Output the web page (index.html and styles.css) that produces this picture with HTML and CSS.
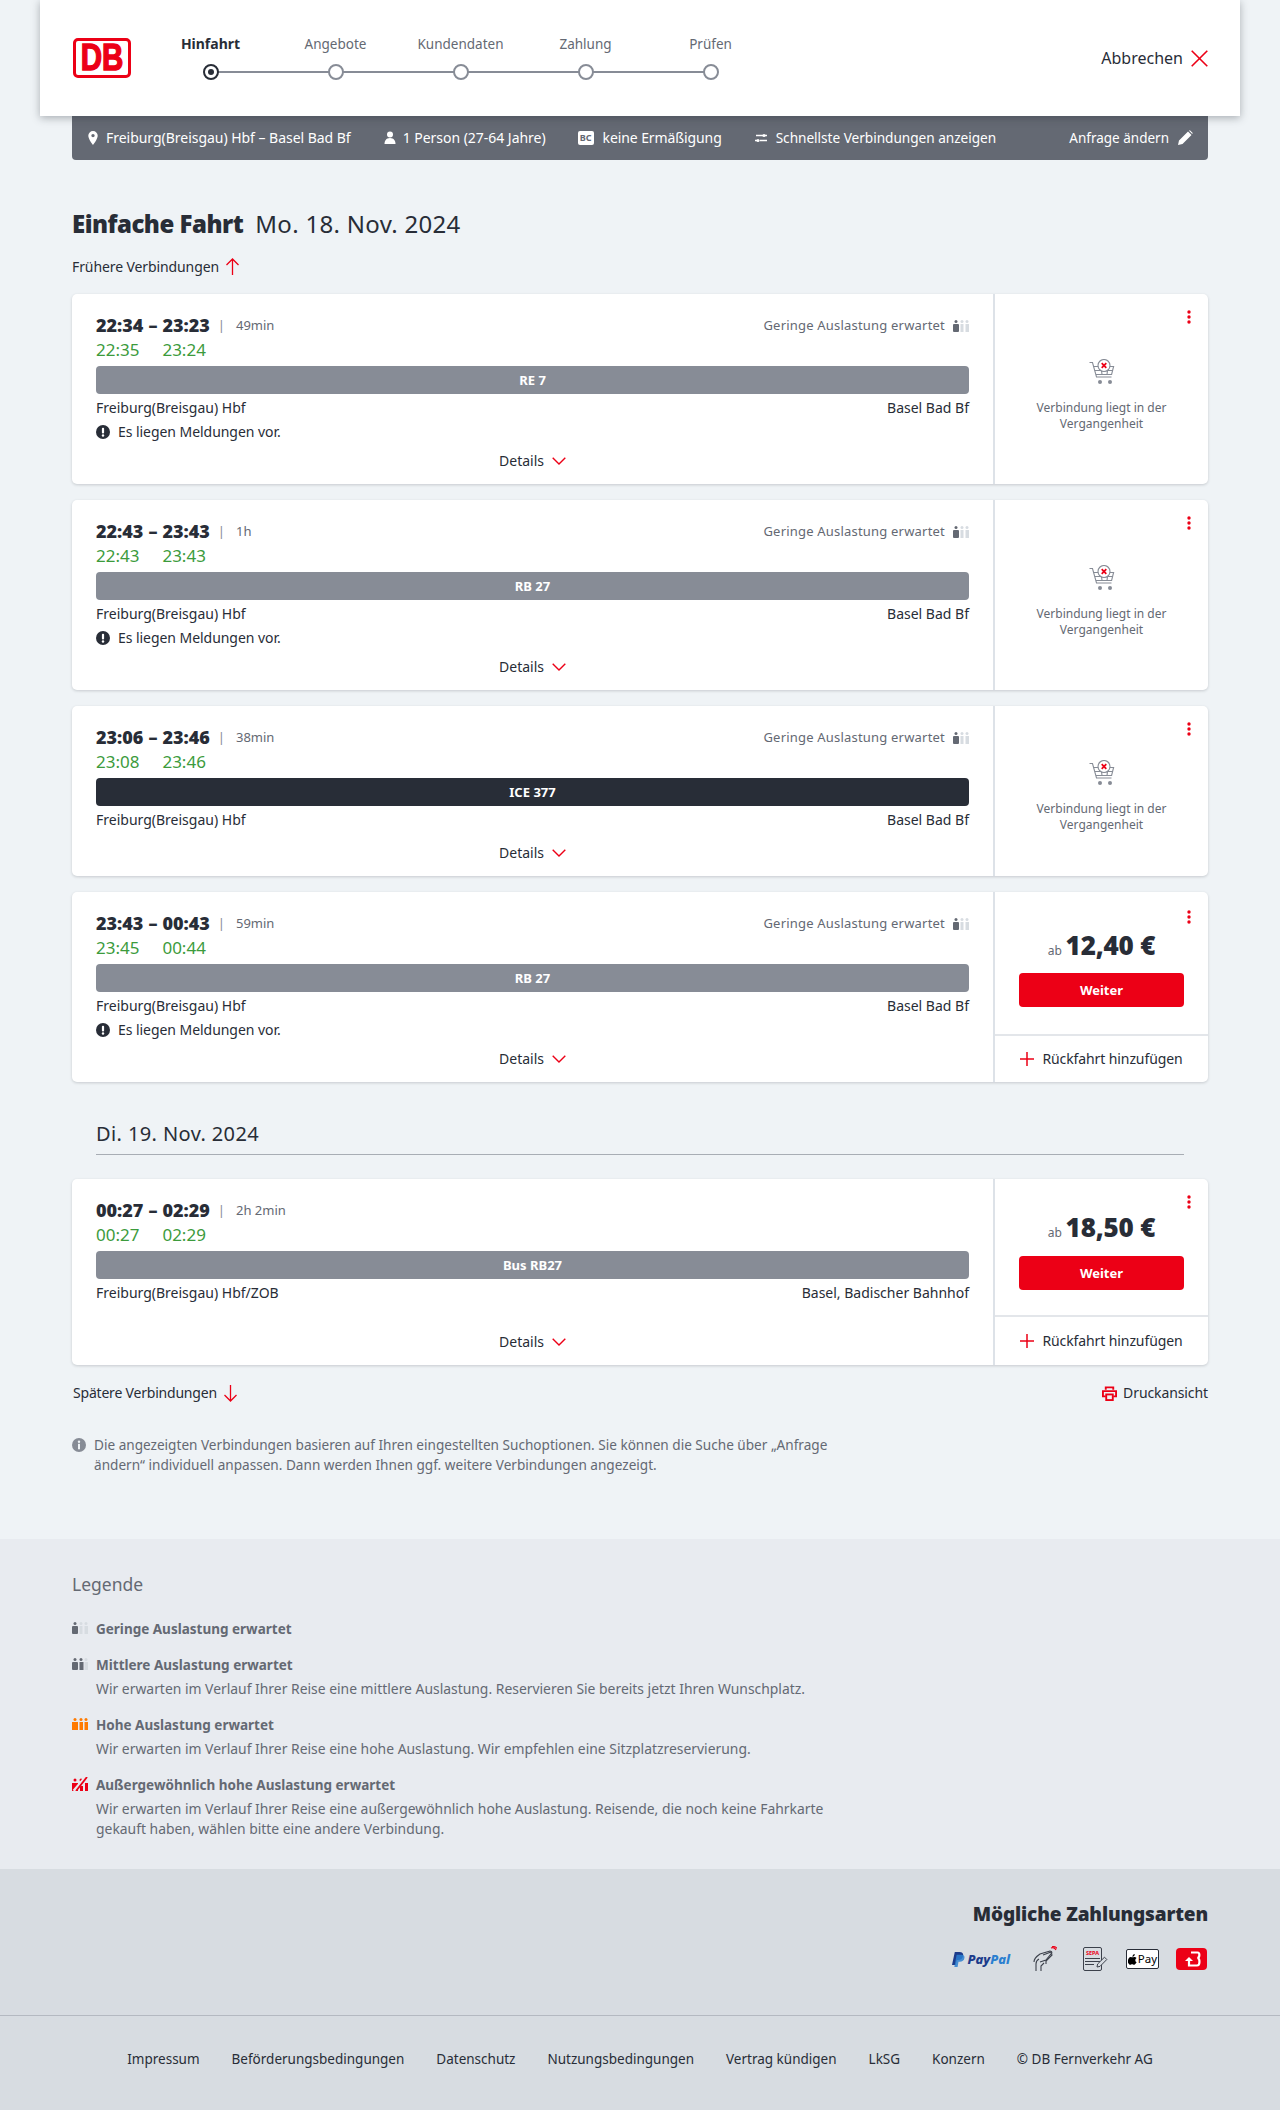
FILE: index.html
```html
<!DOCTYPE html>
<html lang="de">
<head>
<meta charset="utf-8">
<title>Verbindungen</title>
<link rel="stylesheet" href="styles.css">
</head>
<body>
<svg class="sprite" width="0" height="0" aria-hidden="true">
  <symbol id="occ1" viewBox="0 0 16 12"><circle cx="3" cy="1.6" r="1.5" fill="#646973"/><rect x="0" y="4" width="6" height="8" rx="1" fill="#646973"/><circle cx="9" cy="1.6" r="1.5" fill="#d7dce1"/><rect x="7.5" y="4" width="3" height="8" fill="#d7dce1"/><circle cx="14" cy="1.6" r="1.5" fill="#d7dce1"/><rect x="12.5" y="4" width="3.5" height="8" fill="#d7dce1"/></symbol>
  <symbol id="occ2" viewBox="0 0 16 12"><circle cx="3" cy="1.6" r="1.5" fill="#646973"/><rect x="0" y="4" width="6" height="8" rx="1" fill="#646973"/><circle cx="9" cy="1.6" r="1.5" fill="#646973"/><rect x="7.5" y="4" width="4" height="8" fill="#646973"/><circle cx="14" cy="1.6" r="1.5" fill="#d7dce1"/><rect x="12.5" y="4" width="3.5" height="8" fill="#d7dce1"/></symbol>
  <symbol id="occ3" viewBox="0 0 16 12"><circle cx="3" cy="1.6" r="1.5" fill="#ff7a00"/><rect x="0" y="4" width="6" height="8" fill="#ff7a00"/><circle cx="9" cy="1.6" r="1.5" fill="#ff7a00"/><rect x="7.5" y="4" width="3.5" height="8" fill="#ff7a00"/><circle cx="14" cy="1.6" r="1.5" fill="#ff7a00"/><rect x="12.5" y="4" width="3.5" height="8" fill="#ff7a00"/></symbol>
  <symbol id="occ4" viewBox="0 0 16 14"><circle cx="3" cy="3" r="1.5" fill="#ec0016"/><path d="M0 6h6v8H0zM8 9h3v5H8zM13 6h3v8h-3z" fill="#ec0016"/><circle cx="9" cy="3" r="1.5" fill="#ec0016"/><path d="M2 14L14 0" stroke="#e8ebf0" stroke-width="3.4"/><path d="M4 14L15 0" stroke="#ec0016" stroke-width="1.8"/></symbol>
  <symbol id="cart" viewBox="0 0 26 26"><g fill="none" stroke="#878c96" stroke-width="1.1"><path d="M0.5 3.5h3l4 14.5h15"/><path d="M4.600 7.500h20l-2 8H7"/><path d="M6 11.500h18M12 7.500l1 8M19 7.500l-1 8"/><circle cx="15" cy="6.500" r="6" fill="#fff"/></g><circle cx="11" cy="23" r="2" fill="#878c96"/><circle cx="21" cy="23" r="2" fill="#878c96"/><path d="M12.700 4.200l4.600 4.600M17.300 4.200l-4.600 4.600" stroke="#ec0016" stroke-width="1.700"/></symbol>
  <symbol id="kebab" viewBox="0 0 4 14"><circle cx="2" cy="2" r="1.700"/><circle cx="2" cy="7" r="1.700"/><circle cx="2" cy="12" r="1.700"/></symbol>
  <symbol id="warn" viewBox="0 0 14 14"><circle cx="7" cy="7" r="7" fill="#282d37"/><rect x="5.900" y="2.800" width="2.200" height="5.600" rx="1" fill="#fff"/><circle cx="7" cy="10.500" r="1.200" fill="#fff"/></symbol>
  <symbol id="chev" viewBox="0 0 14 8"><path d="M.7.700L7 7l6.300-6.300" fill="none" stroke="#ec0016" stroke-width="1.400"/></symbol>
  <symbol id="plus" viewBox="0 0 14 14"><path d="M7 0v14M0 7h14" stroke="#ec0016" stroke-width="1.500"/></symbol>
</svg>

<header class="top">
  <div class="logo"><span class="logo-text">DB</span></div>
  <ol class="steps">
    <li class="step step-active"><span class="step-label">Hinfahrt</span><span class="step-dot"></span></li>
    <li class="step"><span class="step-label">Angebote</span><span class="step-dot"></span></li>
    <li class="step"><span class="step-label">Kundendaten</span><span class="step-dot"></span></li>
    <li class="step"><span class="step-label">Zahlung</span><span class="step-dot"></span></li>
    <li class="step"><span class="step-label">Prüfen</span><span class="step-dot"></span></li>
  </ol>
  <a class="cancel">Abbrechen <svg viewBox="0 0 17 17" width="17" height="17"><path d="M.7.700l15.600 15.600M16.300.700L.7 16.300" stroke="#ec0016" stroke-width="1.600"/></svg></a>
</header>

<main class="wrap">
  <div class="query">
    <span class="q-item"><svg class="q-icon" viewBox="0 0 16 16"><path d="M8 1a4.700 4.700 0 0 0-4.700 4.700C3.300 9 8 15 8 15s4.700-6 4.700-9.300A4.700 4.700 0 0 0 8 1zm0 6.300a1.700 1.700 0 1 1 0-3.400 1.700 1.700 0 0 1 0 3.400z" fill="#fff"/></svg>Freiburg(Breisgau) Hbf – Basel Bad Bf</span>
    <span class="q-item"><svg class="q-icon" viewBox="0 0 16 16"><circle cx="8" cy="4.500" r="3" fill="#fff"/><path d="M2.500 14c0-3 1.500-6 5.500-6s5.500 3 5.500 6z" fill="#fff"/></svg>1 Person (27-64 Jahre)</span>
    <span class="q-item q-disc"><span class="bc">BC</span>keine Ermäßigung</span>
    <span class="q-item q-fast"><svg class="q-icon" viewBox="0 0 16 16"><path d="M3 5.500h7M12 5.500h2M2 10.500h2M7 10.500h7" stroke="#fff" stroke-width="1.500"/><circle cx="11" cy="5.500" r="1.600" fill="#fff"/><circle cx="5" cy="10.500" r="1.600" fill="#fff"/></svg>Schnellste Verbindungen anzeigen</span>
    <a class="q-edit">Anfrage ändern<svg viewBox="0 0 16 16" width="16" height="16"><path d="M1 15l1-4.500L11 1.500 14.500 5 5.500 14zM12 .8l.9-.5 2.800 2.800-.5.900z" fill="#fff"/></svg></a>
  </div>

  <h1 class="title"><strong>Einfache Fahrt</strong> <span>Mo. 18. Nov. 2024</span></h1>
  <a class="pager pager-up">Frühere Verbindungen <svg viewBox="0 0 14 18" width="15" height="18"><path d="M7 17V1M1 7l6-6 6 6" fill="none" stroke="#ec0016" stroke-width="1.300"/></svg></a>

  <section class="cards">
    <article class="card">
      <div class="c-main">
        <div class="times"><b>22:34</b><b>–</b><b>23:23</b><span class="dur"><i>|</i>49min</span><span class="occ">Geringe Auslastung erwartet<svg class="occ-icon"><use href="#occ1"/></svg></span>
          <span class="rt">22:35</span><span></span><span class="rt">23:24</span></div>
        <div class="train">RE 7</div>
        <div class="stations"><span>Freiburg(Breisgau) Hbf</span><span>Basel Bad Bf</span></div>
        <div class="msg"><svg class="msg-icon"><use href="#warn"/></svg>Es liegen Meldungen vor.</div>
        <div class="details">Details<svg class="chev"><use href="#chev"/></svg></div>
      </div>
      <aside class="c-side past">
        <svg class="kebab"><use href="#kebab"/></svg>
        <svg class="cart"><use href="#cart"/></svg>
        <p>Verbindung liegt in der Vergangenheit</p>
      </aside>
    </article>

    <article class="card">
      <div class="c-main">
        <div class="times"><b>22:43</b><b>–</b><b>23:43</b><span class="dur"><i>|</i>1h</span><span class="occ">Geringe Auslastung erwartet<svg class="occ-icon"><use href="#occ1"/></svg></span>
          <span class="rt">22:43</span><span></span><span class="rt">23:43</span></div>
        <div class="train">RB 27</div>
        <div class="stations"><span>Freiburg(Breisgau) Hbf</span><span>Basel Bad Bf</span></div>
        <div class="msg"><svg class="msg-icon"><use href="#warn"/></svg>Es liegen Meldungen vor.</div>
        <div class="details">Details<svg class="chev"><use href="#chev"/></svg></div>
      </div>
      <aside class="c-side past">
        <svg class="kebab"><use href="#kebab"/></svg>
        <svg class="cart"><use href="#cart"/></svg>
        <p>Verbindung liegt in der Vergangenheit</p>
      </aside>
    </article>

    <article class="card">
      <div class="c-main">
        <div class="times"><b>23:06</b><b>–</b><b>23:46</b><span class="dur"><i>|</i>38min</span><span class="occ">Geringe Auslastung erwartet<svg class="occ-icon"><use href="#occ1"/></svg></span>
          <span class="rt">23:08</span><span></span><span class="rt">23:46</span></div>
        <div class="train train-dark">ICE 377</div>
        <div class="stations"><span>Freiburg(Breisgau) Hbf</span><span>Basel Bad Bf</span></div>
        <div class="details">Details<svg class="chev"><use href="#chev"/></svg></div>
      </div>
      <aside class="c-side past past-short">
        <svg class="kebab"><use href="#kebab"/></svg>
        <svg class="cart"><use href="#cart"/></svg>
        <p>Verbindung liegt in der Vergangenheit</p>
      </aside>
    </article>

    <article class="card">
      <div class="c-main">
        <div class="times"><b>23:43</b><b>–</b><b>00:43</b><span class="dur"><i>|</i>59min</span><span class="occ">Geringe Auslastung erwartet<svg class="occ-icon"><use href="#occ1"/></svg></span>
          <span class="rt">23:45</span><span></span><span class="rt">00:44</span></div>
        <div class="train">RB 27</div>
        <div class="stations"><span>Freiburg(Breisgau) Hbf</span><span>Basel Bad Bf</span></div>
        <div class="msg"><svg class="msg-icon"><use href="#warn"/></svg>Es liegen Meldungen vor.</div>
        <div class="details">Details<svg class="chev"><use href="#chev"/></svg></div>
      </div>
      <aside class="c-side">
        <svg class="kebab kebab-low"><use href="#kebab"/></svg>
        <div class="buy">
          <div class="price"><small>ab</small> <strong>12,40 €</strong></div>
          <button class="btn">Weiter</button>
        </div>
        <div class="return"><svg class="plus"><use href="#plus"/></svg>Rückfahrt hinzufügen</div>
      </aside>
    </article>

    <h2 class="day">Di. 19. Nov. 2024</h2>

    <article class="card">
      <div class="c-main">
        <div class="times"><b>00:27</b><b>–</b><b>02:29</b><span class="dur"><i>|</i>2h 2min</span>
          <span class="occ"></span>
          <span class="rt">00:27</span><span></span><span class="rt">02:29</span></div>
        <div class="train">Bus RB27</div>
        <div class="stations"><span>Freiburg(Breisgau) Hbf/ZOB</span><span>Basel, Badischer Bahnhof</span></div>
        <div class="details">Details<svg class="chev"><use href="#chev"/></svg></div>
      </div>
      <aside class="c-side">
        <svg class="kebab"><use href="#kebab"/></svg>
        <div class="buy buy-tight">
          <div class="price"><small>ab</small> <strong>18,50 €</strong></div>
          <button class="btn">Weiter</button>
        </div>
        <div class="return return-tall"><svg class="plus"><use href="#plus"/></svg>Rückfahrt hinzufügen</div>
      </aside>
    </article>
  </section>

  <div class="after">
    <a class="pager pager-down">Spätere Verbindungen <svg viewBox="0 0 14 18" width="15" height="18"><path d="M7 1v16M1 11l6 6 6-6" fill="none" stroke="#ec0016" stroke-width="1.300"/></svg></a>
    <a class="print"><svg viewBox="0 0 16 16" width="15" height="15"><path d="M4 4V1.500h8V4M4 11H1V5.500h14V11h-3" fill="none" stroke="#ec0016" stroke-width="2"/><rect x="4.500" y="9" width="7" height="6" fill="none" stroke="#ec0016" stroke-width="2"/></svg>Druckansicht</a>
  </div>

  <p class="info"><svg class="info-icon" viewBox="0 0 14 14"><circle cx="7" cy="7" r="7" fill="#878c96"/><circle cx="7" cy="3.700" r="1.200" fill="#eff3f6"/><rect x="6" y="5.800" width="2" height="5.500" fill="#eff3f6"/></svg>Die angezeigten Verbindungen basieren auf Ihren eingestellten Suchoptionen. Sie können die Suche über „Anfrage ändern“ individuell anpassen. Dann werden Ihnen ggf. weitere Verbindungen angezeigt.</p>
</main>

<section class="legend">
  <div class="legend-in">
    <h3>Legende</h3>
    <dl>
      <dt><svg class="occ-icon"><use href="#occ1"/></svg>Geringe Auslastung erwartet</dt>
      <dt><svg class="occ-icon"><use href="#occ2"/></svg>Mittlere Auslastung erwartet</dt>
      <dd>Wir erwarten im Verlauf Ihrer Reise eine mittlere Auslastung. Reservieren Sie bereits jetzt Ihren Wunschplatz.</dd>
      <dt><svg class="occ-icon"><use href="#occ3"/></svg>Hohe Auslastung erwartet</dt>
      <dd>Wir erwarten im Verlauf Ihrer Reise eine hohe Auslastung. Wir empfehlen eine Sitzplatzreservierung.</dd>
      <dt><svg class="occ-icon occ-icon-tall"><use href="#occ4"/></svg>Außergewöhnlich hohe Auslastung erwartet</dt>
      <dd>Wir erwarten im Verlauf Ihrer Reise eine außergewöhnlich hohe Auslastung. Reisende, die noch keine Fahrkarte gekauft haben, wählen bitte eine andere Verbindung.</dd>
    </dl>
  </div>
</section>

<section class="pay">
  <h3>Mögliche Zahlungsarten</h3>
  <div class="pay-icons">
    <span class="paypal"><svg viewBox="0 0 14 16" width="13" height="15"><path d="M3 0h5c3 0 4.500 1.500 4 4-.5 3-2.500 4.500-5.500 4.500H5L4 14H0z" fill="#1b3b8b"/><path d="M5 3h5c2.500 0 3.800 1.200 3.400 3.500-.5 2.700-2.400 4-5 4H7L6 16H2.500z" fill="#2a7fd0" opacity=".85"/></svg><em>Pay</em><em class="pal">Pal</em></span>
    <svg class="pay-hand" viewBox="0 0 24 26" width="24" height="26"><g fill="none" stroke="#3c414b" stroke-width="1.100"><path d="M1 16c0-4 3-6 6-8l10-3c2 0 2.500 2 1 3l-5 6-6 2"/><path d="M10 9l8-3 1 3-6 6"/><path d="M3 25v-7c0-2 1-4 3-5M8 25v-5l3-3M13 14v4"/></g><path d="M18 2c2-1 4 0 5 2M19 .7c2-.5 4 .3 5 1.800" fill="none" stroke="#ec0016" stroke-width="1.100"/></svg>
    <span class="sepa"><span class="sepa-doc"><b>SEPA</b><i></i><i></i><i class="short"></i></span><svg viewBox="0 0 12 12" width="12" height="12"><path d="M1 11l.6-3L8.500 1.200 10.800 3.500 4 10.400z" fill="#d7dce1" stroke="#3c414b"/></svg></span>
    <span class="apple"><svg viewBox="0 0 10 12" width="9" height="11"><path d="M7.400 0c.1 1-.3 1.700-.7 2.200-.5.500-1.200.9-1.800.8-.1-.8.300-1.600.7-2C6 .5 6.800.1 7.400 0zM9.700 8.500c-.3.700-.5 1-.9 1.600-.6.900-1.300 1.800-2.200 1.800-.8 0-1-.5-2-.5s-1.300.5-2.100.5C1.600 11.900.900 11 .4 10.200-1 7.900.4 3.200 3 3.100c.8 0 1.500.5 2 .5s1.200-.6 2.200-.5c.4 0 1.600.2 2.300 1.300-2 1.200-1.700 3.900.2 4.600z" fill="#000"/></svg>Pay</span>
    <span class="dbpay"><svg viewBox="0 0 20 16" width="20" height="16"><path d="M9 1.500h6.500c2.500 0 2.500 4.800 0 5.500 2.700.5 2.700 7.500-.5 7.500H7V10" fill="none" stroke="#fff" stroke-width="2.200"/><path d="M3 10l4-4 4 4z" fill="#fff"/></svg></span>
  </div>
</section>

<footer class="foot">
  <a>Impressum</a><a>Beförderungsbedingungen</a><a>Datenschutz</a><a>Nutzungsbedingungen</a><a>Vertrag kündigen</a><a>LkSG</a><a>Konzern</a><a>© DB Fernverkehr AG</a>
</footer>
</body>
</html>
```

FILE: styles.css
```css
* { box-sizing: border-box; }
html, body { margin: 0; padding: 0; }
body {
  background: #eff3f6;
  color: #282d37;
  font-family: "Noto Sans", sans-serif;
  font-size: 14px;
  line-height: 20px;
  height: 2110px;
  overflow: hidden;
}
.sprite { position: absolute; }
a { color: inherit; text-decoration: none; }
h1, h2, h3, p, dl, dd, dt, ol { margin: 0; padding: 0; font-weight: 400; }

/* header */
.top {
  position: relative;
  z-index: 2;
  width: 1200px;
  height: 116px;
  margin: 0 auto;
  padding: 0 32px 0 33px;
  background: #fff;
  display: flex;
  align-items: center;
  box-shadow: 0 2px 8px rgba(40, 45, 55, .35);
}
.logo { width: 58px; height: 40px; margin-right: 17px; border: 3px solid #ec0016; border-radius: 5px; background: #fff; display: flex; align-items: center; justify-content: center; }
.logo-text { display: block; font-family: "Liberation Sans", sans-serif; font-weight: 700; font-size: 36px; line-height: 34px; color: #ec0016; -webkit-text-stroke: 1.4px #ec0016; transform: scaleX(.82); }
.steps { list-style: none; display: grid; grid-template-columns: repeat(5, 125px); padding-bottom: 2px; }
.step { position: relative; display: flex; flex-direction: column; align-items: center; gap: 10px; color: #646973; font-size: 13.5px; }
.step-label { line-height: 20px; }
.step-dot { position: relative; z-index: 1; width: 16px; height: 16px; border: 2px solid #878c96; border-radius: 50%; background: #fff; }
.step + .step::before { content: ""; position: absolute; left: -62.500px; width: 125px; bottom: 7px; height: 2px; background: #878c96; }
.step-active { color: #282d37; font-size: 14px; }
.step-active .step-label { font-weight: 700; }
.step-active .step-dot { border-color: #282d37; }
.step-active .step-dot::after { content: ""; display: block; width: 6px; height: 6px; margin: 3px; border-radius: 50%; background: #282d37; }
.cancel { margin-left: auto; display: flex; align-items: center; gap: 8px; font-size: 16px; }

.wrap { width: 1136px; margin: 0 auto; }

/* query bar */
.query {
  height: 44px;
  padding: 0 15px 0 13px;
  background: #646973;
  border-radius: 0 0 4px 4px;
  color: #fff;
  display: flex;
  align-items: center;
  gap: 31px;
}
.q-item { display: flex; align-items: center; gap: 5px; letter-spacing: -.03px; }
.q-icon { width: 16px; height: 16px; }
.bc { width: 16px; height: 14px; margin-right: 4px; background: #fff; color: #646973; border-radius: 2px; font-size: 9px; font-weight: 700; line-height: 14px; text-align: center; }
.q-disc { margin-left: 1px; letter-spacing: -.1px; }
.q-fast { font-size: 13.65px; gap: 7px; }
.q-edit { margin-left: auto; display: flex; align-items: center; gap: 8px; font-size: 13.5px; }

.title { margin-top: 48px; font-size: 24px; line-height: 32px; display: flex; gap: 12px; }
.title strong { font-weight: 900; letter-spacing: -.5px; }
.title span { letter-spacing: .3px; }
.pager { display: inline-flex; align-items: center; gap: 6px; line-height: 24px; letter-spacing: -.1px; }
.pager-up { margin-top: 15px; }
.pager-down { letter-spacing: -.2px; }

/* cards */
.cards { margin-top: 15px; display: flex; flex-direction: column; gap: 16px; }
.card {
  display: flex;
  background: #fff;
  border-radius: 5px;
  box-shadow: 0 1px 3px rgba(40, 45, 55, .2);
}
.c-main { flex: 0 0 923px; padding: 19px 24px 11px; display: flex; flex-direction: column; border-right: 2px solid #dde2e8; }
.times { display: grid; grid-template-columns: auto auto auto auto 1fr; column-gap: 5px; line-height: 24px; }
.times b { font-size: 18px; font-weight: 900; line-height: 25px; }
.dur { color: #646973; font-size: 13px; line-height: 25px; }
.dur i { font-style: normal; color: #878c96; margin: 0 11px 0 3px; }
.occ { color: #646973; justify-self: end; display: flex; align-items: center; gap: 8px; font-size: 13px; letter-spacing: .2px; line-height: 25px; }
.occ-icon { width: 16px; height: 12px; flex: none; }
.rt { color: #3c9b3c; font-size: 17px; }
.train { margin-top: 4px; height: 28px; border-radius: 4px; background: #878c96; color: #fff; font-size: 13px; font-weight: 700; line-height: 28px; text-align: center; }
.train-dark { background: #282d37; }
.stations { margin-top: 2px; display: flex; justify-content: space-between; line-height: 24px; }
.msg { display: flex; align-items: center; gap: 8px; line-height: 24px; letter-spacing: -.05px; }
.msg-icon { width: 14px; height: 14px; }
.details { margin-top: auto; padding-top: 5px; display: flex; justify-content: center; align-items: center; gap: 8px; line-height: 24px; }
.chev { width: 14px; height: 8px; }

.c-side { position: relative; flex: 1; display: flex; flex-direction: column; }
.kebab { position: absolute; top: 16px; right: 17px; width: 4px; height: 14px; fill: #ec0016; }
.kebab-low { top: 18px; }
.past { align-items: center; color: #646973; padding-top: 65px; }
.past-short { min-height: 170px; padding-top: 54px; }
.cart { width: 26px; height: 26px; }
.past p { margin-top: 15px; width: 150px; font-size: 12px; line-height: 16px; text-align: center; }
.buy { flex: 1; padding: 36px 24px 0; display: flex; flex-direction: column; gap: 9px; }
.buy-tight { padding: 31px 24px 25px; gap: 10px; }
.price { height: 36px; text-align: center; line-height: 34px; }
.price small { color: #646973; font-size: 12px; }
.price strong { font-size: 26px; font-weight: 900; letter-spacing: -.2px; }
.btn { height: 34px; border: 0; border-radius: 4px; background: #ec0016; color: #fff; font: 700 13px "Noto Sans", sans-serif; }
.return { height: 48px; border-top: 2px solid #e3e6ea; display: flex; align-items: center; justify-content: center; gap: 8px; letter-spacing: -.1px; }
.return-tall { height: 50px; }
.plus { width: 14px; height: 14px; }

.day { margin: 21px 24px 8px; padding-bottom: 5px; border-bottom: 1px solid #a8adb4; font-size: 20px; letter-spacing: .4px; line-height: 30px; }

.after { margin-top: 16px; display: flex; justify-content: space-between; padding-left: 1px; }
.print { display: flex; align-items: center; gap: 6px; line-height: 24px; letter-spacing: -.1px; }
.info { position: relative; margin-top: 30px; width: 770px; padding-left: 22px; color: #646973; font-size: 13.6px; }
.info-icon { position: absolute; left: 0; top: 3px; width: 14px; height: 14px; }

/* legend */
.legend { margin-top: 64px; padding: 31px 0; background: #e8ebf0; height: 330px; color: #646973; }
.legend-in { width: 1136px; margin: 0 auto; }
.legend h3 { font-size: 17.5px; line-height: 28px; }
.legend dl { margin-top: 21px; }
.legend dt { position: relative; font-weight: 700; font-size: 13.5px; padding-left: 24px; margin-top: 16px; }
.legend dt:first-child { margin-top: 0; }
.legend dt .occ-icon { position: absolute; left: 0; top: 3px; }
.legend dd { margin-top: 4px; padding-left: 24px; width: 780px; font-size: 13.9px; }
.legend dt .occ-icon-tall { height: 14px; top: 2px; }

/* payment */
.pay { padding: 31px 72px 0; height: 147px; background: #d7dce1; text-align: right; border-bottom: 1px solid #b4b9c1; }
.pay h3 { font-size: 19px; font-weight: 900; letter-spacing: -.15px; line-height: 28px; }
.pay-icons { margin-top: 20px; display: flex; justify-content: flex-end; align-items: center; height: 22px; }
.paypal { display: flex; align-items: center; font-size: 13px; font-weight: 800; color: #1b3b8b; gap: 2px; margin-right: 23px; }
.paypal em { margin: 0; }
.paypal .pal { margin-left: -2px; color: #2a7fd0; }
.pay-hand { margin-right: 26px; }
.sepa { position: relative; width: 25px; height: 24px; margin-right: 18px; }
.sepa-doc { display: flex; flex-direction: column; width: 19px; height: 24px; padding: 2px 1px 0; border: 1px solid #3c414b; border-radius: 2px; gap: 2px; text-align: center; }
.sepa-doc b { color: #ec0016; font-size: 5.5px; line-height: 6px; }
.sepa-doc i { height: 1px; background: #3c414b; }
.sepa-doc .short { width: 60%; }
.sepa svg { position: absolute; right: 0; bottom: 3px; }
.apple { width: 33px; height: 20px; margin-right: 17px; background: #fff; border: 1px solid #282d37; border-radius: 2px; display: flex; align-items: center; justify-content: center; gap: 1px; font-size: 11.5px; line-height: 18px; color: #000; }
.dbpay { width: 31px; height: 22px; margin-right: 1px; background: #ec0016; border-radius: 4px; display: flex; align-items: center; justify-content: center; }

/* footer */
.foot { height: 94px; padding-top: 33px; background: #d7dce1; display: flex; justify-content: center; gap: 32px; font-size: 13.5px; }
```
